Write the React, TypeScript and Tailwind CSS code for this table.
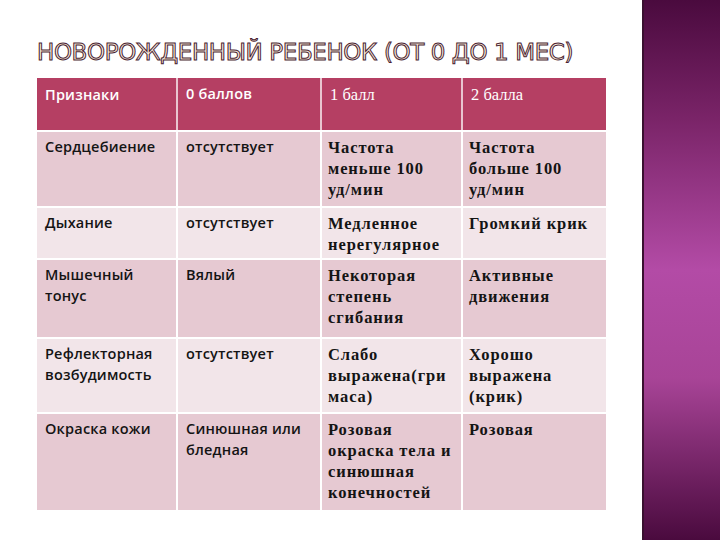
import React from "react";

type Row = { sign: string; zero: string; one: string; two: string; tone: "dark" | "light"; h: string };

const rows: Row[] = [
  { sign: "Сердцебиение", zero: "отсутствует", one: "Частота меньше 100 уд/\u2060мин", two: "Частота больше 100 уд/\u2060мин", tone: "dark", h: "h-[76px]" },
  { sign: "Дыхание", zero: "отсутствует", one: "Медленное нерегулярное", two: "Громкий крик", tone: "light", h: "h-[52px]" },
  { sign: "Мышечный тонус", zero: "Вялый", one: "Некоторая степень сгибания", two: "Активные движения", tone: "dark", h: "h-[79px]" },
  { sign: "Рефлекторная возбудимость", zero: "отсутствует", one: "Слабо выражена(гри маса)", two: "Хорошо выражена (крик)", tone: "light", h: "h-[75px]" },
  { sign: "Окраска кожи", zero: "Синюшная или бледная", one: "Розовая окраска тела и синюшная конечностей", two: "Розовая", tone: "dark", h: "h-[98px]" },
];

const sans = "font-['Open_Sans','Liberation_Sans',sans-serif] font-semibold text-[14.5px] leading-[21px] tracking-[0.2px]";
const serif = "font-['Liberation_Serif',serif] font-bold text-[16.5px] leading-[21px] tracking-[0.9px]";

export default function App() {
  return (
    <div className="flex h-[540px] w-[720px] bg-white">
      <div className="flex flex-1 flex-col pl-[37px] pt-[40px]">
        <h1 className="h-[38px] whitespace-nowrap font-['DejaVu_Sans',sans-serif] text-[23px] leading-[24px] tracking-[-0.4px] text-[#fdeedd] [-webkit-text-stroke:1px_#4a1f33]">
          НОВОРОЖДЕННЫЙ РЕБЕНОК (ОТ 0 ДО 1 МЕС)
        </h1>
        <div className="flex w-[569px] flex-col">
          <div className="grid h-[52px] grid-cols-[141px_144px_141px_143px] bg-[#b53f63] text-white">
            <div className={`border-r-2 border-white/70 px-2 pt-[6px] ${sans}`}>Признаки</div>
            <div className={`border-r-2 border-white/70 px-2 pt-[5px] ${sans}`}>0 баллов</div>
            <div className="border-r-2 border-white/70 px-2 pt-[6px] font-['Liberation_Serif',serif] text-[16.5px] leading-[21px]">1 балл</div>
            <div className="px-2 pt-[6px] font-['Liberation_Serif',serif] text-[16.5px] leading-[21px]">2 балла</div>
          </div>
          {rows.map((r) => (
            <div
              key={r.sign}
              className={`grid grid-cols-[141px_144px_141px_143px] border-t-2 border-white text-[#141414] ${r.h} ${
                r.tone === "dark" ? "bg-[#e6c9d2]" : "bg-[#f2e5e9]"
              }`}
            >
              <div className={`border-r-2 border-white px-2 pt-[4px] ${sans}`}>{r.sign}</div>
              <div className={`border-r-2 border-white px-2 pt-[4px] ${sans}`}>{r.zero}</div>
              <div className={`border-r-2 border-white px-[6px] pt-[5px] ${serif}`}>{r.one}</div>
              <div className={`px-[6px] pt-[5px] ${serif}`}>{r.two}</div>
            </div>
          ))}
        </div>
      </div>
      <div className="h-full w-[78px] border-l-2 border-[#3a1030] bg-[linear-gradient(to_bottom,#4a0a3e_0%,#7a2468_22%,#b34ba6_50%,#a84497_70%,#4a0a3e_100%)]" />
    </div>
  );
}
